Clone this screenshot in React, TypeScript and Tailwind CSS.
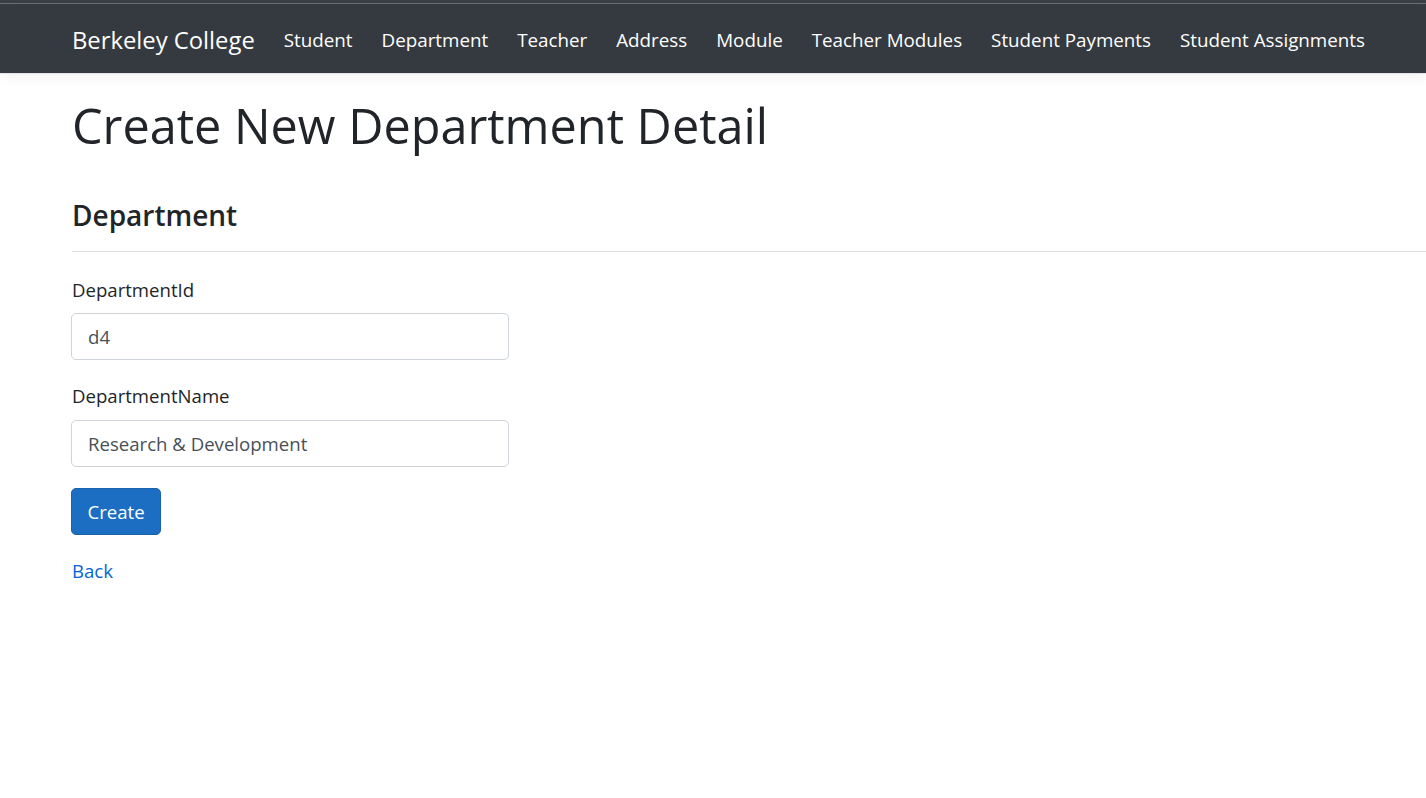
import React from 'react';

const links = [
  'Student',
  'Department',
  'Teacher',
  'Address',
  'Module',
  'Teacher Modules',
  'Student Payments',
  'Student Assignments',
];

const App: React.FC = () => {
  return (
    <div className="min-h-screen bg-white text-[#212529] font-['Open_Sans','Noto_Sans',sans-serif]">
      <div className="h-[3px] bg-[#3b3f45]" />
      <div className="h-px bg-[#6c6f74]" />
      <nav className="h-[70px] bg-[#343a40] border-b border-[#e5e5e5] shadow-[0_4px_12px_rgba(0,0,0,0.05)] flex items-center pl-[72px] pt-[4px]">
        <a className="text-[23.8px] text-white leading-none mr-[29px] whitespace-nowrap">Berkeley College</a>
        <ul className="flex items-center gap-[29px]">
          {links.map((l) => (
            <li key={l}>
              <a className="text-[18.8px] text-white leading-none whitespace-nowrap">{l}</a>
            </li>
          ))}
        </ul>
      </nav>

      <main className="pl-[72px] pt-[21px]">
        <h1 className="text-[48.6px] leading-[60px] font-medium mb-[42px]">Create New Department Detail</h1>

        <h4 className="text-[28px] leading-[36px] font-semibold">Department</h4>
        <hr className="mt-[18px] border-0 border-t border-[#dedede]" />

        <form className="w-[438px] -ml-px mt-[23px]">
          <div className="mb-[21px]">
            <label className="block text-[18.6px] leading-[30px] mb-[8px] ml-px">DepartmentId</label>
            <input
              readOnly
              value="d4"
              className="block w-full h-[47px] px-[16px] border border-[#ced4da] rounded-[5px] text-[18.6px] text-[#495057] outline-none"
            />
          </div>
          <div className="mb-[21px]">
            <label className="block text-[18.6px] leading-[30px] mb-[9px] ml-px">DepartmentName</label>
            <input
              readOnly
              value="Research & Development"
              className="block w-full h-[47px] px-[16px] border border-[#ced4da] rounded-[5px] text-[18.6px] text-[#495057] outline-none"
            />
          </div>
          <button
            type="button"
            className="h-[47px] w-[90px] bg-[#1b6ec2] border border-[#1861ac] rounded-[5px] text-white text-[18.6px]"
          >
            Create
          </button>
        </form>

        <div className="mt-[21px]">
          <a className="text-[18.6px] leading-[30px] text-[#0366d6]">Back</a>
        </div>
      </main>
    </div>
  );
};

export default App;
